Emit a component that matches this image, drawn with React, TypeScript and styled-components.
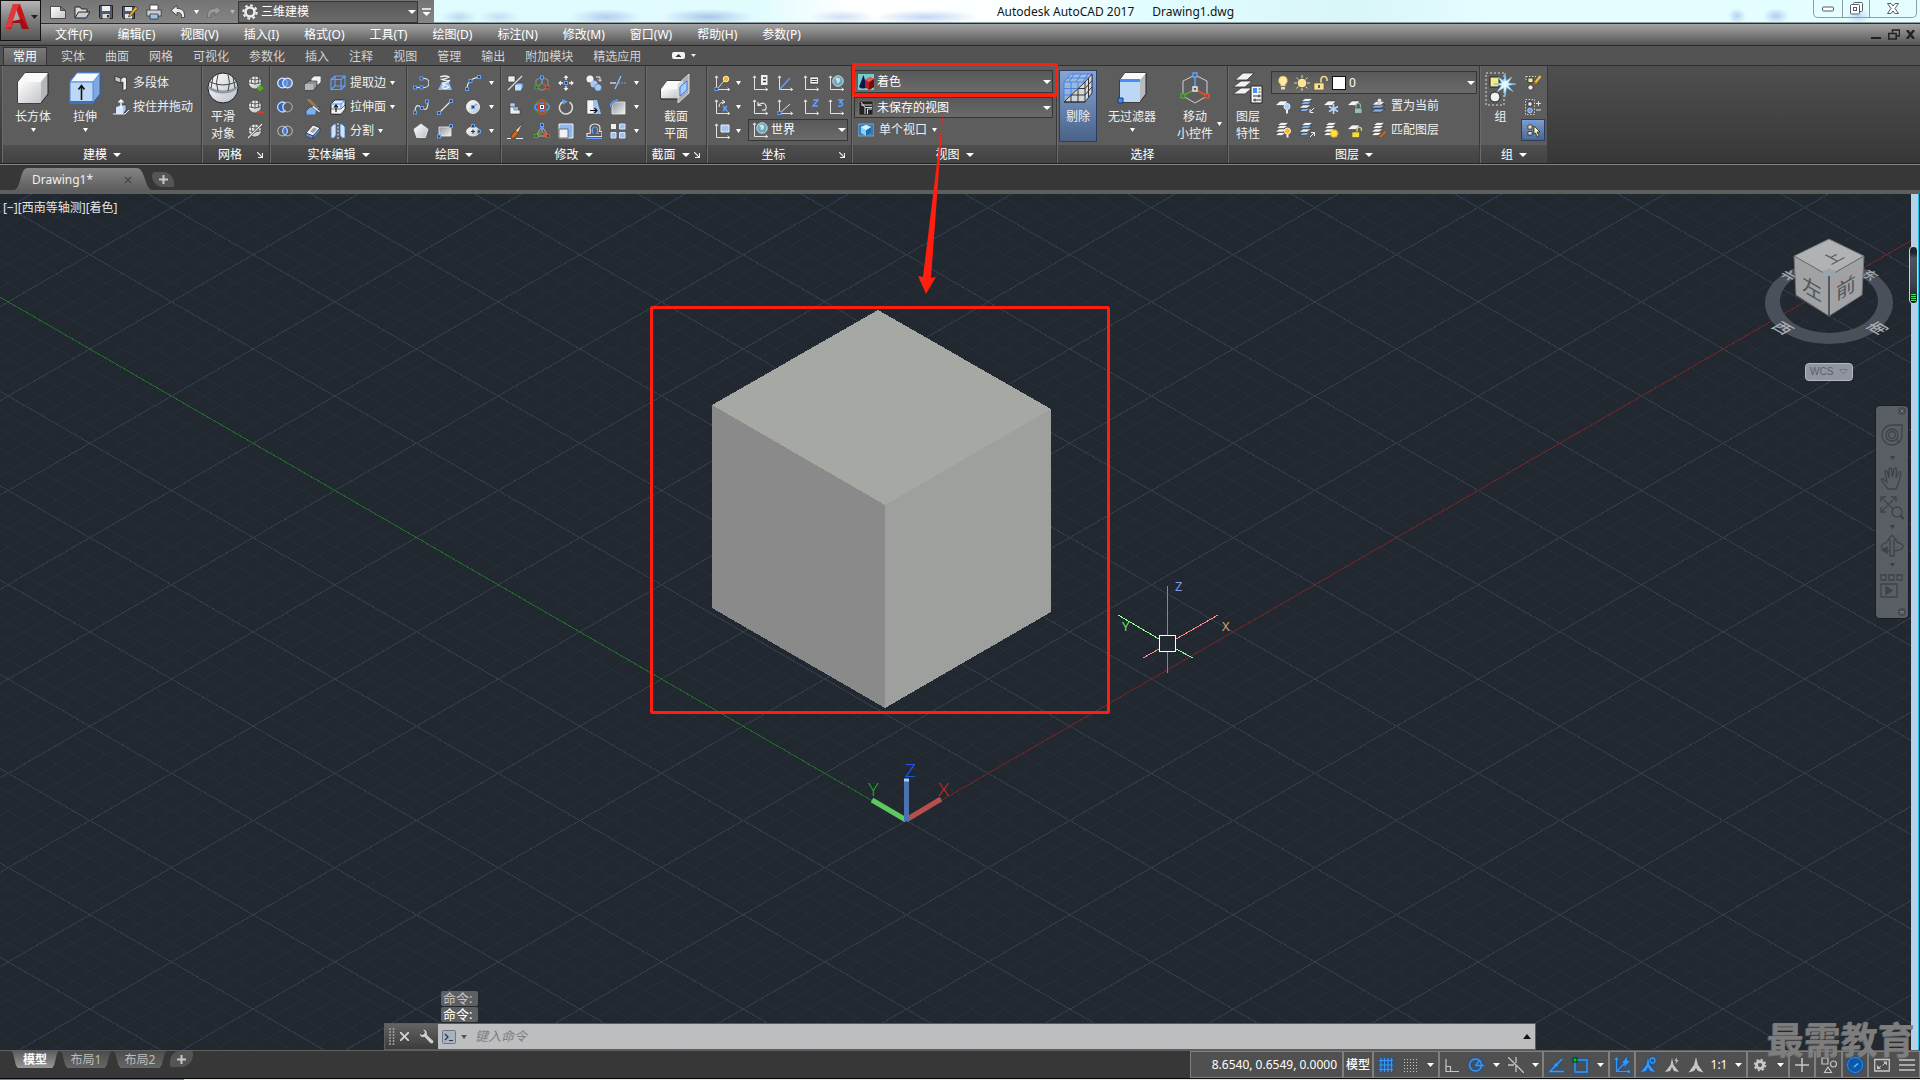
import React from "react";
import styled, { createGlobalStyle, css } from "styled-components";

const Global = createGlobalStyle`
  *, *::before, *::after { box-sizing: border-box; }
  body { margin: 0; background: #373737; overflow: hidden; }
  button, select, input { font: inherit; color: inherit; }
  button { background: none; border: 0; padding: 0; margin: 0; }
  svg { display: block; flex: none; }
`;

const App_ = styled.div`
  display: flex;
  flex-direction: column;
  height: 100vh;
  position: relative;
  overflow: hidden;
  font-family: "Noto Sans", "Noto Sans CJK SC", sans-serif;
  font-size: 12px;
  line-height: 16px;
  color: #f0f0f0;
`;

/* ---------- header ---------- */
const Header = styled.header`
  display: grid;
  grid-template-columns: 41px 1fr;
  grid-template-rows: 24px 22px;
`;
const AppButton = styled.button`
  grid-area: 1 / 1 / 3 / 2;
  z-index: 1;
  height: 41px;
  display: flex;
  align-items: center;
  padding: 0 0 8px 4px;
  gap: 2px;
  border: 1px solid #111;
  background: linear-gradient(#b4b4b4, #7d7d7d 50%, #565656);
`;
const TitleBar = styled.div`
  grid-area: 1 / 2 / 2 / 3;
  display: flex;
  border-bottom: 1px solid #2c2c2c;
`;
const Quick = styled.div`
  display: flex;
  align-items: center;
  padding-left: 5px;
  background: linear-gradient(#747474, #858585);
`;
const QuickButton = styled.button<{ $w?: number }>`
  width: ${(p) => p.$w ?? 24}px;
  height: 22px;
  display: flex;
  align-items: center;
  justify-content: center;
`;
const Glass = styled.div`
  flex: 1;
  display: flex;
  border-bottom: 1px solid #8fa3a6;
  background:
    radial-gradient(18px 7px at 25px 17px, #bcd9f2, transparent),
    radial-gradient(20px 7px at 65px 17px, #c4def4, transparent),
    radial-gradient(36px 8px at 172px 17px, #b3cdee, transparent),
    radial-gradient(46px 8px at 274px 17px, #a9c6ec, transparent),
    radial-gradient(34px 7px at 408px 17px, #d0dff6, transparent),
    radial-gradient(52px 7px at 492px 17px, #c3d6f3, transparent),
    radial-gradient(9px 8px at 1303px 16px, #b5d4f2, transparent),
    radial-gradient(13px 8px at 1342px 16px, #b0cdf0, transparent),
    radial-gradient(12px 8px at 1424px 16px, #c0d9f4, transparent),
    linear-gradient(90deg, #dffbfd, #e2fcfe 22%, #ffffff 28%, #fbffff 40%, #e2fdfe 48%, #d9f6f8 62%, #e6feff 72%, #e4feff);
`;
const Title = styled.h1`
  flex: 1;
  margin: 0;
  display: flex;
  justify-content: center;
  gap: 18px;
  padding-right: 16px;
  font-size: 12px;
  line-height: 24px;
  font-weight: 400;
  color: #141414;
`;
const WindowButtons = styled.div`
  display: flex;
  height: 18px;
  margin-right: 3px;
  border: 1px solid #8d9ea1;
  border-top: 0;
  border-radius: 0 0 5px 5px;
`;
const WindowButton = styled.button<{ $w: number }>`
  width: ${(p) => p.$w}px;
  display: flex;
  align-items: center;
  justify-content: center;
  & + & { border-left: 1px solid #8d9ea1; }
`;
const MenuBar = styled.nav`
  grid-area: 2 / 1 / 3 / 3;
  display: flex;
  align-items: center;
  padding: 0 3px 0 42px;
  background: linear-gradient(#a3a3a3, #7c7c7c 50%, #525252);
  border-bottom: 1px solid #2a2a2a;
`;
const MenuItem = styled.button`
  padding: 0 12px 0 13px;
  color: #fff;
`;
const Spacer = styled.div`flex: 1;`;

/* ---------- ribbon ---------- */
const Tabs = styled.div`
  display: flex;
  align-items: flex-end;
  height: 20px;
  padding-left: 3px;
  background: #535353;
  border-bottom: 1px solid #2e2e2e;
`;
const Tab = styled.button<{ $on?: boolean }>`
  height: 18px;
  padding: 2px 10px 0;
  color: ${(p) => (p.$on ? "#fff" : "#d2d2d2")};
  ${(p) =>
    p.$on &&
    css`
      background: linear-gradient(#7a7a7a, #606060);
      border: 1px solid #333;
      border-bottom: 0;
      padding: 1px 9px 0;
      margin-right: 4px;
    `}
`;
const Ribbon = styled.div`
  display: flex;
  height: 99px;
  padding-left: 2px;
  background: linear-gradient(#4f4f4f, #373737);
  border-bottom: 1px solid #858585;
  box-shadow: inset 0 -1px 0 #222;
`;
const Panel = styled.section<{ $w: number }>`
  width: ${(p) => p.$w}px;
  display: flex;
  flex-direction: column;
  margin-bottom: 1px;
  border-right: 1px solid #3a3a3a;
  box-shadow: inset 1px 0 0 #6a6a6a;
  background: #5d5d5d;
`;
const Body = styled.div<{ $pl?: number }>`
  flex: 1;
  display: flex;
  align-items: flex-start;
  padding: 4px 0 0 ${(p) => p.$pl ?? 0}px;
`;
const Footer = styled.div`
  display: flex;
  align-items: center;
  height: 18px;
  margin-left: 1px;
  padding-top: 2px;
  background: linear-gradient(#4e4e4e, #424242);
`;
const FooterLabel = styled.button`
  flex: 1;
  display: flex;
  align-items: center;
  justify-content: center;
  gap: 6px;
  color: #fff;
`;
const Launcher = styled.button`width: 12px;`;
const Column = styled.div<{ $w?: number; $ml?: number }>`
  width: ${(p) => p.$w ?? 24}px;
  margin: 1px 0 0 ${(p) => p.$ml ?? 0}px;
  display: grid;
  grid-auto-rows: 24px;
`;
const Cell = styled.button`
  display: flex;
  align-items: center;
  justify-content: center;
`;
const Labeled = styled.button<{ $gap?: number; $pl?: number }>`
  display: flex;
  align-items: center;
  height: 24px;
  gap: ${(p) => p.$gap ?? 4}px;
  padding-left: ${(p) => p.$pl ?? 0}px;
  white-space: nowrap;
`;
const List = styled.div<{ $ml: number }>`
  margin: 1px 0 0 ${(p) => p.$ml}px;
  display: flex;
  flex-direction: column;
`;
const Big = styled.button<{ $w: number; $on?: boolean }>`
  width: ${(p) => p.$w}px;
  height: 72px;
  display: flex;
  flex-direction: column;
  align-items: center;
  padding-top: 2px;
  line-height: 17px;
  white-space: nowrap;
  ${(p) =>
    p.$on &&
    css`
      margin-left: 2px;
      background: linear-gradient(#86a5d6, #4a6288);
      border: 1px solid #2b3d60;
      padding-top: 1px;
    `}
`;
const BigText = styled.span`
  margin-top: 4px;
  margin-bottom: 3px;
`;
const GizmoMore = styled.button`
  width: 6px;
  margin: 52px 0 0 -6px;
`;
const CoordGrid = styled.div`
  margin: 1px 0 0 6px;
  width: 100px;
  display: grid;
  grid-template-columns: repeat(4, 24px);
  justify-content: space-between;
  grid-auto-rows: 24px;
`;
const Combo = styled.label<{ $h?: number; $span?: boolean; $w?: number }>`
  display: flex;
  align-items: center;
  gap: 3px;
  height: ${(p) => p.$h ?? 22}px;
  width: ${(p) => (p.$w ? p.$w + "px" : "auto")};
  padding: 0 1px 0 3px;
  border: 1px solid #363636;
  background: linear-gradient(#585858, #6b6b6b);
  ${(p) => p.$span && css`grid-column: 1 / -1;`}
`;
const Pick = styled.select`
  appearance: none;
  flex: 1;
  min-width: 0;
  border: 0;
  padding: 0;
  background: transparent;
  color: #fff;
  outline: 0;
`;
const ViewColumn = styled.div`
  flex: 1;
  display: flex;
  flex-direction: column;
  padding: 0 3px 0 2px;
`;
const ViewGap = styled.div`height: 4px;`;
const LayerBlock = styled.div`
  flex: 1;
  margin: 1px 2px 0 3px;
`;
const LayerRow = styled.div`
  display: flex;
  height: 24px;
`;
const LayerIcon = styled(Cell)`width: 24px;`;
const Toggle = styled(Cell)`
  background: linear-gradient(#7f9fd3, #4b648c);
  border: 1px solid #2b3d60;
  height: 22px;
`;

/* ---------- document tabs ---------- */
const DocTabs = styled.div`
  display: flex;
  align-items: flex-end;
  height: 29px;
  padding-left: 14px;
  background: #373737;
  border-bottom: 4px solid #5e5e5e;
`;
const DocTab = styled.div`
  display: flex;
  align-items: center;
  width: 138px;
  height: 22px;
  padding: 2px 20px 0 18px;
  clip-path: path("M0 22 C8 20 5 0 14 0 H122 C132 0 130 20 138 22 Z");
  background: linear-gradient(#858585, #5e5e5e);
`;
const DocName = styled.button`
  flex: 1;
  text-align: left;
`;
const AddDoc = styled.button`
  align-self: center;
  width: 22px;
  height: 15px;
  margin-top: 4px;
  display: flex;
  align-items: center;
  justify-content: center;
  border-radius: 4px 12px 2px 12px;
  background: #555;
`;

/* ---------- viewport ---------- */
const Stage = styled.main`
  flex: 1;
  min-height: 0;
  display: flex;
  position: relative;
  background: #212830;
`;
const Scene = styled.svg`
  flex: 1 1 0;
  min-width: 0;
  height: 100%;
`;
const Edge = styled.div`
  width: 8px;
  background: #b9d0ea;
  border-right: 1px solid #16c6e8;
  margin-right: 1px;
  box-shadow: 1px 0 0 #1c2a33;
`;
const ViewLabel = styled.div`
  position: absolute;
  left: 3px;
  top: 6px;
  display: flex;
  color: #e4e4e4;
`;
const CubeBox = styled.div`
  position: absolute;
  right: 25px;
  top: 40px;
  display: flex;
  flex-direction: column;
  align-items: center;
`;
const Wcs = styled.button`
  display: flex;
  align-items: center;
  justify-content: space-between;
  width: 48px;
  height: 18px;
  margin-top: 9px;
  padding: 0 4px;
  border: 1px solid #b4b7c2;
  border-radius: 4px;
  background: #9194a1;
  color: #5a5d68;
  font-family: "Liberation Sans", Arial, sans-serif;
  font-size: 10px;
`;
const NavBar = styled.div`
  position: absolute;
  right: 12px;
  top: 212px;
  width: 32px;
  display: flex;
  flex-direction: column;
  align-items: center;
  height: 212px;
  border-radius: 4px;
  background: rgba(108, 112, 117, 0.75);
  box-shadow: 0 0 0 1px #191e25;
`;
const NavButton = styled.button<{ $h: number; $end?: boolean }>`
  height: ${(p) => p.$h}px;
  width: 32px;
  display: flex;
  align-items: center;
  justify-content: ${(p) => (p.$end ? "flex-end" : "center")};
  padding-right: ${(p) => (p.$end ? 2 : 0)}px;
`;
const Meter = styled.div`
  position: absolute;
  right: 2px;
  top: 52px;
  width: 9px;
  height: 58px;
  border: 1px solid #cdd5da;
  border-radius: 4px;
  background: linear-gradient(#1d242b 10%, #4c545d 20%, #3a424a 68%, #14191e);
  display: flex;
  flex-direction: column;
  justify-content: flex-end;
  gap: 1px;
  padding: 0 1px 2px;
`;
const MeterBar = styled.i`
  height: 1px;
  background: #3fe05c;
`;
const Command = styled.div`
  position: absolute;
  left: 20%;
  right: 20%;
  bottom: 0;
  display: flex;
  flex-direction: column;
`;
const History = styled.div`
  display: flex;
  flex-direction: column;
  align-items: flex-start;
  gap: 1px;
  margin: 0 0 1px 57px;
  font-size: 13px;
`;
const HistoryLine = styled.span<{ $dim?: boolean }>`
  height: 15px;
  line-height: 15px;
  width: 37px;
  padding-left: 2px;
  border-radius: 2px;
  background: #5d6060;
  color: ${(p) => (p.$dim ? "#c4c4c4" : "#fff")};
`;
const CommandBar = styled.div`
  display: flex;
  height: 27px;
  border: 1px solid #5a5e63;
`;
const CommandGrip = styled.div`
  width: 53px;
  display: flex;
  align-items: center;
  padding-left: 4px;
  background: linear-gradient(#636363, #3c3c3c);
`;
const CommandButton = styled.button<{ $ml: number }>`
  margin-left: ${(p) => p.$ml}px;
`;
const CommandField = styled.label`
  flex: 1;
  display: flex;
  align-items: center;
  gap: 5px;
  padding: 0 4px;
  background: rgba(202, 203, 204, 0.92);
`;
const CommandInput = styled.input`
  flex: 1;
  border: 0;
  outline: 0;
  padding: 0 0 2px 3px;
  background: transparent;
  font-size: 13px;
  color: #333;
  &::placeholder { color: #7c7e81; font-style: italic; opacity: 1; }
`;

/* ---------- status bar ---------- */
const Bottom = styled.footer`
  display: flex;
  height: 28px;
  background: #373737;
  border-top: 1px solid #606060;
  padding-left: 11px;
`;
const LayoutTab = styled.button<{ $w: number; $on?: boolean }>`
  width: ${(p) => p.$w}px;
  height: 17px;
  margin-right: 1px;
  clip-path: polygon(0 0, 100% 0, 96% 12%, 90% 82%, 86% 100%, 14% 100%, 10% 82%, 4% 12%);
  background: ${(p) => (p.$on ? "linear-gradient(#5c5c5c, #989898)" : "linear-gradient(#4c4c4c, #666)")};
  color: ${(p) => (p.$on ? "#fff" : "#bdbdbd")};
  font-weight: ${(p) => (p.$on ? 700 : 400)};
`;
const AddLayout = styled.button`
  width: 23px;
  height: 16px;
  margin-left: 2px;
  display: flex;
  align-items: center;
  justify-content: center;
  border-radius: 10px 2px 12px 2px;
  background: #545454;
`;
const Seg = styled.div<{ $w?: number }>`
  display: flex;
  align-items: center;
  height: 27px;
  width: ${(p) => (p.$w ? p.$w + "px" : "auto")};
  border: 1px solid #808080;
  background: #505050;
`;
const Coords = styled.button`
  flex: 1;
  text-align: right;
  padding-right: 5px;
  color: #fff;
`;
const Model = styled.button`
  flex: 1;
  color: #fff;
  font-weight: 500;
`;
const SBtn = styled.button<{ $w?: number; $lit?: boolean }>`
  width: ${(p) => p.$w ?? 24}px;
  height: 25px;
  display: flex;
  align-items: center;
  justify-content: center;
  color: ${(p) => (p.$lit ? "#2f9bff" : "#c6c6c6")};
  ${(p) => p.$lit && css`svg { filter: drop-shadow(0 0 2px #0a4fb0); }`}
`;
const Scale = styled.span`
  width: 22px;
  text-align: center;
  color: #fff;
`;
const Taskbar = styled.div`
  height: 2px;
  border-top: 1px solid #08090b;
  background: linear-gradient(90deg, #7c8288 184px, #e9e9e4 184px);
`;
const Watermark = styled.div`
  position: absolute;
  right: 5px;
  bottom: 20px;
  font-size: 37px;
  line-height: 40px;
  font-weight: 700;
  color: rgba(128, 128, 128, 0.95);
  text-shadow: -1px 1px 0 rgba(110, 110, 110, 0.8);
  pointer-events: none;
`;
const Markup = styled.svg`
  position: absolute;
  left: 0;
  top: 0;
  pointer-events: none;
`;

/* ---------- icons ---------- */
const B = "#62a0ff";
const W = "#e6e6e6";
const dot = (x: number, y: number, c = B) => (
  <rect x={x - 1.5} y={y - 1.5} width="3" height="3" fill="#3b4350" stroke={c} strokeWidth="1" />
);
const sphere = (
  <>
    <circle cx="8" cy="7.5" r="6.5" fill="url(#ball)" stroke="#333" strokeWidth=".6" />
    <path d="M1.5 7.5Q8 10.5 14.5 7.5M2.8 4Q8 6 13.2 4M8 1v8.5M5 1.8Q3.6 5 5 9M11 1.8Q12.4 5 11 9" fill="none" stroke="#444" strokeWidth=".8" />
  </>
);
const axes = <path d="M2.5 1v13.5H16M1 3l1.500-2.200L4 3M13.500 12.800l2.200 1.700-2.200 1.500" fill="none" stroke="#e2e2e2" strokeWidth="1" />;
const layers = (c = "#f4f4f4", top = "#f4f4f4") => (
  <g stroke="#333" strokeWidth=".5">
    <path d="M0 13.500l4-3h7l-4 3z" fill={c} />
    <path d="M0 10l4-3h8l-4 3z" fill="#f4f4f4" />
    <path d="M1 6.500l4-3h8l-4 3z" fill={c} />
    <path d="M2 3.500l4-3h8l-4 3z" fill={top} />
  </g>
);
const sheet = <path d="M0 7.500l5-4.500h8l-4 4.500z" fill="#f2f2f2" stroke="#333" strokeWidth=".5" />;

const small: Record<string, React.ReactNode> = {
  newfile: <path d="M.5 2.500h10l5 4v8H.5zM10.500 2.500v4h5" fill="url(#paper)" stroke="#333" strokeWidth=".8" />,
  open: (<><path d="M1 14V3h5l1.500 2H13v3" fill="#ddd" stroke="#222" /><path d="M1 14L4.500 8H16l-4 6z" fill="#c4ccd4" stroke="#222" /></>),
  save: (<><path d="M1.500 1.500h13v13h-12l-1-1z" fill="#4e5b6c" stroke="#222" /><path d="M4 2h8v5H4z" fill="#eee" /><path d="M4.500 10h7v4.500h-7z" fill="#d8d8d8" /><path d="M9 11h2v2.500H9z" fill="#333" /></>),
  saveas: (<><path d="M.5 2.500h12v12h-11l-1-1z" fill="#4e5b6c" stroke="#222" /><path d="M3 3h7v4H3zM3 10h7v4.500H3z" fill="#e6e6e6" /><path d="M7 11l6.500-8.500 2.200 1.800L9 12l-2.500 1z" fill="#f3b23c" stroke="#222" strokeWidth=".6" /></>),
  print: (<><path d="M4 6V1h8v5" fill="#fff" stroke="#333" strokeWidth=".8" /><path d="M.8 6h14.400v6H.8z" fill="#c9ccd0" stroke="#333" strokeWidth=".8" /><path d="M4 10h8v5H4z" fill="#9ec3f2" stroke="#333" strokeWidth=".8" /></>),
  undo: <path d="M1 6.500L7 1.500v3c5 0 8 2 7.500 9h-3c.3-4-1-5-4.500-5v3z" fill="#e9e9e9" stroke="#333" strokeWidth=".8" />,
  redo: <path d="M15 6.500L9 1.500v3c-5 0-8 2-7.500 9h3c-.3-4 1-5 4.500-5v3z" fill="#9a9a9a" stroke="#666" strokeWidth=".8" />,
  gear: (<><circle cx="8" cy="8" r="4.500" fill="none" stroke="#efefef" strokeWidth="2.600" /><circle cx="8" cy="8" r="6.700" fill="none" stroke="#efefef" strokeWidth="2" strokeDasharray="2.630 2.630" /></>),
  polysolid: (<><path d="M2 1l6 2.500V8L2 6z" fill="#c4c8ce" stroke="#222" strokeWidth=".7" /><path d="M8 3.500L11 2l2.500 1v11l-3.500 2V7L8 8z" fill="#e9ebee" stroke="#222" strokeWidth=".7" /></>),
  presspull: (<><path d="M3 8l3-2h7v5l-3 4H3z" fill="#a9c8f2" stroke="#345" strokeWidth=".7" /><path d="M3 8h7v7H3z" fill="#dbe8fa" /><path d="M8 9V1M5.500 3.500L8 1l2.500 2.500" stroke="#fff" strokeWidth="1.400" fill="none" /><path d="M0 15h12l4-4" fill="none" stroke="#eee" /></>),
  meshPlus: (<>{sphere}<path d="M10 13h6M13 10v6" stroke="#4fb312" strokeWidth="2.400" /></>),
  meshMinus: (<>{sphere}<path d="M10 13.500h6" stroke="#e23a16" strokeWidth="2.400" /></>),
  meshSlash: (<>{sphere}<path d="M1 15L15 1" stroke="#444" strokeWidth="2.400" /><path d="M1 15L15 1" stroke="#f0f0f0" strokeWidth="1.200" /></>),
  union: (<><circle cx="5.500" cy="8" r="4.800" fill="#3f73c9" stroke="#dfeaff" strokeWidth="1.300" /><circle cx="10.500" cy="8" r="4.800" fill="#5d94e6" fillOpacity=".7" stroke="#dfeaff" strokeWidth="1.300" /></>),
  subtract: (<><circle cx="10.500" cy="8" r="4.800" fill="none" stroke="#9aa0a8" strokeWidth="1.300" /><path d="M8 3.900a4.800 4.800 0 1 0 0 8.200a4.800 4.800 0 0 1 0-8.200z" fill="#2e63b8" stroke="#bcd5ff" strokeWidth="1.300" /></>),
  intersect: (<><circle cx="5.500" cy="8" r="4.800" fill="none" stroke="#a9aeb5" strokeWidth="1.200" /><circle cx="10.500" cy="8" r="4.800" fill="none" stroke="#a9aeb5" strokeWidth="1.200" /><path d="M8 3.900a4.800 4.800 0 0 1 0 8.200a4.800 4.800 0 0 1 0-8.200z" fill="#3a78dc" stroke="#cfe0ff" /></>),
  thicken: (<><path d="M6 4l3-3h7v6l-3 3H6z" fill="#f2f2f2" stroke="#333" strokeWidth=".6" /><path d="M0 9l4-3h8v5l-3 4H0z" fill="#8d9299" stroke="#222" strokeWidth=".6" /><path d="M0 9h8.500v6H0z" fill="#b2b6bb" /></>),
  slice: (<><path d="M1 12l4-4h10l-4 5v3H1z" fill="#7fb0ee" stroke="#234" strokeWidth=".6" /><path d="M3 0l8 8" stroke="#a87a45" strokeWidth="2.600" /><path d="M8 6l8 7-2 .5-7-5z" fill="#e8e8e8" stroke="#222" strokeWidth=".5" /></>),
  shell: (<><path d="M1 10l7-8 7 3-7 8z" fill="#f0f0f0" stroke="#222" strokeWidth=".7" /><path d="M1 10l7 3v3l-7-3zM15 5v3l-7 8v-3z" fill="#5f94de" stroke="#223" strokeWidth=".5" /><path d="M5 8.500l4-4 3 1.500-4 4z" fill="#9a9da2" /></>),
  edges: <path d="M1 4.500h10v10H1zM5 1h10v10H5zM1 4.500L5 1M11 4.500L15 1M11 14.500l4-3.500M1 14.500L5 11" fill="none" stroke={B} strokeWidth="1.100" />,
  extrudeFace: (<><path d="M1 5l4-4h10v9l-4 5H1z" fill="#dce9fb" stroke="#222" strokeWidth=".8" /><path d="M1 10h10l4-4v4l-4 5H1z" fill="#f2f2f2" stroke="#222" strokeWidth=".6" /><path d="M1 5h10v5M11 5l4-4" fill="none" stroke="#4f8ee8" /><path d="M6 13V6M4 8.500L6 6l2 2.500" stroke="#111" strokeWidth="1.200" fill="none" /></>),
  separate: (<><path d="M1 4l3-3h2v11l-2 3H1zM15 4l-3-3h-2v11l2 3h3z" fill="#cfe2fb" stroke="#3b6eb5" strokeWidth=".8" /><path d="M8 0v16" stroke="#eee" strokeDasharray="2 1.500" /></>),
  pline: (<><path d="M2 12.500h6.500M8.500 3.500h3a4.500 4.500 0 0 1 0 9h-3" fill="none" stroke={W} strokeWidth="1.200" />{dot(2, 12.500)}{dot(8.500, 12.500)}{dot(8.500, 3.500)}</>),
  helix: (<><path d="M1 15L5 7h7l3 8z" fill="#8db8f3" /><path d="M3 2Q8 0 12 2Q9 4 5 4.500q4 2 8 1Q10 8 5 8.500q5 1.500 7 3.500-3 2.500-6 1-1-2.500 2-3" fill="none" stroke="#f4f4f4" strokeWidth="1.300" /></>),
  arc: (<><path d="M2 14Q2 4 14 2" fill="none" stroke={W} strokeWidth="1.200" />{dot(2, 14)}{dot(5.500, 6)}{dot(14, 2)}</>),
  spline: (<><path d="M2 14Q2 5 6 7t5 3q4 2 4-8" fill="none" stroke={W} strokeWidth="1.200" />{dot(2, 13.500)}{dot(9, 9)}{dot(14, 2.500)}</>),
  line: (<><path d="M2 14L14 2" stroke={W} strokeWidth="1.200" />{dot(2, 14)}{dot(14, 2)}</>),
  circle: (<><circle cx="8" cy="8" r="6.500" fill="url(#ball)" stroke="#fff" strokeWidth=".8" /><path d="M8 8l4-3" stroke="#7f8a9a" />{dot(8, 8)}</>),
  polygon: <path d="M8 1l7 5.200-2.700 8.300H3.700L1 6.200z" fill="url(#ball)" stroke="#f4f4f4" strokeWidth=".8" />,
  rect: (<><path d="M2 4h12v9H2z" fill="url(#steel)" stroke="#eee" strokeWidth=".8" />{dot(2, 13.500)}{dot(14, 3)}</>),
  ellipse: (<><ellipse cx="8" cy="8.500" rx="6.500" ry="4.500" fill="url(#ball)" stroke="#eee" strokeWidth=".8" /><path d="M6 8.500h4M8 6.500v4" stroke="#333" strokeWidth="1.200" />{dot(8, 3)}{dot(14, 8.500)}</>),
  align3: (<><path d="M1 1h7v6H1z" fill="#eee" stroke="#333" strokeWidth=".6" /><path d="M1 15L15 1" stroke="#ddd" strokeWidth="1.200" /><path d="M8 10l2-2h6v5l-2 2.500H8z" fill="#8fbaf5" stroke="#234" strokeWidth=".6" /><path d="M8 10h6v5.500H8z" fill="#c9defa" /></>),
  gizmoMove: (<><path d="M8 8V2" stroke={B} strokeWidth="1.400" /><path d="M8 8l5.500 4.500" stroke="#e2512c" strokeWidth="1.400" /><path d="M8 8l-5.500 4.500" stroke="#4fa82e" strokeWidth="1.400" /><path d="M8 2l6 3v6M8 2L2 5v6M2 12l6 3.500L14 12" stroke="#aaa" fill="none" strokeWidth=".7" />{dot(8, 2.500)}{dot(13.500, 12.500, "#e2512c")}{dot(2.500, 12.500, "#4fa82e")}</>),
  move: (<><path d="M8 0l2.500 3h-5zM8 16l2.500-3h-5zM0 8l3-2.500v5zM16 8l-3-2.500v5z" fill="#f0f0f0" /><path d="M8 3v2M8 11v2M3 8h2M11 8h2" stroke="#f0f0f0" strokeWidth="1.300" />{dot(8, 8)}</>),
  copy: (<><circle cx="4" cy="4" r="3.500" fill="#f2f2f2" /><circle cx="8" cy="9" r="3.500" fill="#a6c8f6" /><circle cx="12" cy="12.500" r="3.500" fill="#a6c8f6" stroke="#456" strokeWidth=".4" /><path d="M10 2h4v4M12 4.500L14 6.500l2-2" stroke="#eee" fill="none" /></>),
  trim: (<><path d="M0 8h6" stroke="#eee" strokeWidth="1.200" /><path d="M8 8h8" stroke={B} strokeWidth="1.200" strokeDasharray="2 1" /><path d="M5 14L11 1" stroke="#8ebcff" strokeWidth="1.400" /></>),
  align: (<><path d="M3 4h5v4H3z" fill="#aecdf7" stroke="#345" strokeWidth=".5" /><path d="M3 8h4v3h6v4H3z" fill="#eee" stroke="#333" strokeWidth=".6" /><path d="M7 8h4v3H7z" fill="#7fb0ee" /></>),
  gizmoRot: (<><circle cx="8" cy="8" r="7" fill="none" stroke="#3f8f2b" strokeWidth="1.600" /><ellipse cx="8" cy="8" rx="7.300" ry="4" fill="none" stroke="#4e93ff" strokeWidth="1.600" /><ellipse cx="8" cy="8" rx="3.500" ry="7.300" fill="none" stroke="#e04020" strokeWidth="1.600" />{dot(8, 8, "#fff")}</>),
  rotate: (<><path d="M5.500 2.500a6.500 6.500 0 1 0 6 .6" fill="none" stroke="#dedede" strokeWidth="1.500" /><path d="M4 0l6 2.500L5 5.500z" fill={B} /></>),
  mirror: (<><path d="M1 1h7v14H1z" fill="#f4f4f4" stroke="#333" strokeWidth=".5" /><path d="M8 1h3l4 14H8z" fill="#9cc2f3" /><path d="M4 11.500h7M8.500 9l2.500 2.500L8.500 14" stroke="#111" strokeWidth="1.200" fill="none" /></>),
  fillet: (<><path d="M2 15V9q0-6 7-6h6v12z" fill="url(#steel)" stroke="#eee" strokeWidth=".8" /><path d="M0 8q1-6 8-7" stroke={B} strokeWidth="1.600" fill="none" /></>),
  brush: (<><path d="M16 0L8 8l2.500 2.500z" fill="#f0d9a8" stroke="#222" strokeWidth=".5" /><path d="M8.500 7.500l3 2.500-4 5q-3 1-4.500-.5 2-1 2-3z" fill="#d8641a" stroke="#222" strokeWidth=".5" /><path d="M0 15.500h4M9 15.500h7" stroke="#eee" /></>),
  gizmoScale: (<><path d="M8 3l6 10H2z" fill="none" stroke="#aaa" /><path d="M8 9V2" stroke={B} strokeWidth="1.600" /><path d="M8 9l6 4" stroke="#e2512c" strokeWidth="1.600" /><path d="M8 9l-6 4" stroke="#4fa82e" strokeWidth="1.600" />{dot(8, 2)}{dot(14, 13, "#e2512c")}{dot(2, 13, "#4fa82e")}</>),
  scale: (<><path d="M1 1h14v14H1z" fill="#8eb8f0" stroke="#eee" strokeWidth="1" /><path d="M1 6h9v9H1z" fill="#f2f2f2" stroke="#555" strokeWidth=".8" /></>),
  offset: (<><path d="M4.500 8.500Q2.500 1 9 1t4.500 7.500H16v5H1v-3h3z" fill="none" stroke="#dedede" strokeWidth="1.200" /><path d="M7 10.500Q5 4 9 4t2 6.500h2" fill="none" stroke={B} strokeWidth="1.200" /><path d="M0 15.500h16" stroke={B} /></>),
  array: (<><path d="M1 1h5v5H1z" fill="#eee" /><path d="M9.500 1h5.500v5H9.500zM1 9.500h5v5.500H1zM9.500 9.500H15V15H9.500z" fill="#9cc2f3" stroke="#d6e6fc" /></>),
  ucsA: (<>{axes}<path d="M4 13L10 6" stroke="#ddd" /><circle cx="12" cy="4" r="2.800" fill="#ffb12b" stroke="#fff0b0" />{dot(2.500, 14)}</>),
  ucsB: (<>{axes}<path d="M9 0h6.500v10H9z" fill="#f0f0f0" /><path d="M11 3h3M11 6.500h3" stroke="#345" strokeWidth="1.600" /></>),
  ucsC: (<>{axes}<path d="M3 14L13 3" stroke={B} strokeWidth="1.300" /></>),
  ucsD: (<>{axes}<path d="M7 2h8.500v7H7z" fill="#f0f0f0" stroke="#333" strokeWidth=".6" /><path d="M8.500 4.500h5.500M8.500 6.500h5.500" stroke="#444" /></>),
  ucsE: (<>{axes}<circle cx="10" cy="6" r="5.300" fill="#6fa9bd" stroke="#dcebf3" strokeWidth=".8" /><path d="M7 3q4-1 5 1t-2 4q-2 0-1-2z" fill="#c8e6dc" /></>),
  ucsF: (<>{axes}<path d="M5 8q0-5 5-5M8 1l3 2-3 2" stroke="#eee" fill="none" /><path d="M9 7l4 5M13 7l-4 5" stroke={B} strokeWidth="1.600" /></>),
  ucsG: (<>{axes}<path d="M6 6q7-4 8 1t-4 4M6 3v3.500h3.500" stroke="#e2e2e2" fill="none" strokeWidth="1.200" /></>),
  ucsH: (<>{axes}<path d="M3 14L13 5" stroke="#ddd" />{dot(2.500, 14)}</>),
  ucsZ: (<>{axes}<path d="M10 1h5l-5 6h5" stroke={B} strokeWidth="1.500" fill="none" /></>),
  ucs3: (<>{axes}<path d="M10 1h4.500L12 3.500q3 0 2.500 2.200T10 7" stroke={B} strokeWidth="1.500" fill="none" /></>),
  ucsView: (<>{axes}<path d="M7 2h8v7H7z" fill="#9fc6f7" stroke="#eee" /></>),
  shaded: (<><path d="M0 0h16v16H0z" fill="#74cdc9" /><path d="M1 13L5.500 1 9 13q-4 3-8 0z" fill="#0d1550" /><path d="M7 6l5-3 4 2v8l-5 3-4-3z" fill="#c21d1d" /><path d="M7 6l5-3 4 2-4.500 3z" fill="#e65757" /><path d="M11.500 8L16 5v8l-5 3z" fill="#6d0d0d" /></>),
  unsaved: (<><path d="M1 1h14v14H1z" fill="#222" stroke="#888" strokeWidth=".6" /><path d="M3 5h11M3 2l4 5.500V14M9.500 14V9H14M7 7.500h7" stroke="#ddd" fill="none" /></>),
  viewport: (<><path d="M0 2h16v12H0z" fill="#3d78b7" stroke="#9cc9ee" strokeWidth=".6" /><path d="M3 5l5-2 5 2v6l-5 3-5-3z" fill="#7fd4f7" /><path d="M8 8l5-3v6l-5 3z" fill="#1e6fae" /><path d="M3 5l5-2 5 2-5 3z" fill="#d5f3fd" /></>),
  bulb: (<><path d="M8 1a4.500 4.500 0 0 1 2.500 8.200V11h-5V9.200A4.500 4.500 0 0 1 8 1z" fill="#ffe9a6" stroke="#c59632" strokeWidth=".6" /><path d="M6 12h4v2.500H6z" fill="#ddd" /></>),
  sun: (<><circle cx="8" cy="8" r="3.800" fill="#ffe28a" stroke="#fff0c0" /><path d="M8 0v3M8 13v3M0 8h3M13 8h3M2.500 2.500l2 2M11.500 11.500l2 2M13.500 2.500l-2 2M2.500 13.500l2-2" stroke="#f0d890" /></>),
  lock: (<><path d="M8 8V4.500a3 3 0 0 1 6 0V6" fill="none" stroke="#e8d890" strokeWidth="1.600" /><path d="M1 8h10v7H1z" fill="#f6e39a" stroke="#6e5a1c" strokeWidth=".7" /><path d="M6 10v3" stroke="#333" strokeWidth="1.500" /></>),
  la: (<>{sheet}<circle cx="12" cy="8.500" r="3" fill="#a5ccfb" stroke="#e8f2ff" /><path d="M12 12v3.500" stroke="#eee" strokeWidth="2" /></>),
  lb: (<>{layers("#7fb0ee")}<path d="M15 10l-4 4M11 11v3.500h3.500" stroke="#eee" fill="none" /></>),
  lc: (<>{sheet}<path d="M10.500 6v10M6 8.500l9 5M15 8.500l-9 5" stroke="#b9d7ff" strokeWidth="1.600" /></>),
  ld: (<>{sheet}<path d="M9 10V7.500a2 2 0 0 1 4.500 0V10" fill="none" stroke="#8fb5a0" strokeWidth="1.200" /><path d="M7.500 10h7.500v5.500H7.500z" fill="#98bfa8" stroke="#3b5a48" strokeWidth=".7" /></>),
  le: (<><path d="M0 14l4-3h10l-4 3zM0 10l4-3h10l-4 3z" fill="#7fb0ee" stroke="#223" strokeWidth=".5" /><path d="M1 7l4-3.500h9L10 7z" fill="#f2f2f2" stroke="#333" strokeWidth=".5" /><path d="M8 7V2" stroke="#ccc" strokeWidth="2" /><circle cx="8.500" cy="2.500" r="2" fill="#ddd" /></>),
  lf: (<>{layers()}<circle cx="12.500" cy="9" r="3" fill="#ffb52e" stroke="#fff0c0" /><path d="M12.500 12v3.500" stroke="#eee" strokeWidth="2" /></>),
  lg: (<>{layers("#7fb0ee")}<path d="M11 15l4.500-4.500M12 10.500h3.500V14" stroke="#eee" fill="none" /></>),
  lh: (<>{layers()}<circle cx="11" cy="11.500" r="3.600" fill="#ffe23a" stroke="#f5b52c" strokeDasharray="1.500 1" strokeWidth="1.600" /></>),
  li: (<>{sheet}<path d="M10 10V7.500a2 2 0 0 1 4.500 0V9" fill="none" stroke="#f3d84e" strokeWidth="1.200" /><path d="M5 10h7.500v5.500H5z" fill="#f7dc4a" stroke="#6e5a1c" strokeWidth=".7" /></>),
  lj: (<>{layers()}<path d="M14 8l2 2-6 6-4-2 4-1z" fill="#c56a28" stroke="#442" strokeWidth=".5" /></>),
  g1: (<><path d="M1 1.500h10M1 1v4" stroke="#ddd" strokeDasharray="1.500 1.500" /><path d="M3 3h5v4.500H3z" fill="#f4ea8c" stroke="#222" strokeWidth=".7" /><circle cx="5.500" cy="12.500" r="2.600" fill="#eee" stroke="#222" strokeWidth=".7" /><path d="M15.500 1L10 8" stroke="#edc32f" strokeWidth="2.200" /><path d="M10.500 7.500L8 10" stroke="#c9482a" strokeWidth="1.400" /></>),
  g2: (<><path d="M.5.500h9v15h-9z" fill="none" stroke="#ccc" strokeDasharray="1.500 1.500" /><path d="M3 3h4v4H3z" fill="#eee" stroke="#222" strokeWidth=".7" /><circle cx="5" cy="11.500" r="2.300" fill="#5b93f0" stroke="#dfe9ff" strokeWidth=".7" /><path d="M11 4.500h5M13.500 2v5M11 11h5" stroke="#ddd" /></>),
  g3: (<><path d="M.5.500h9v15h-9z" fill="none" stroke="#4f8cf0" strokeDasharray="1.500 1.500" /><path d="M3 3h4v4H3z" fill="#f4ea8c" stroke="#222" strokeWidth=".7" /><path d="M3 9.500h4v3.500H3z" fill="#ddd" stroke="#222" strokeWidth=".7" /><path d="M9 4l6 6h-3l2 4-1.500 1-2-4L9 12z" fill="#fff6c0" stroke="#111" strokeWidth=".7" /></>),
  /* status bar */
  sGrid: <path d="M1 3.500h14M1 8h14M1 12.500h14M3 1v14M6.500 1v14M10 1v14M13.500 1v14" stroke="currentColor" strokeWidth="1.200" />,
  sSnap: <path d="M2 2.500h13M2 5.500h13M2 8.500h13M2 11.500h13M2 14.500h13" stroke="currentColor" strokeDasharray="1 2" />,
  sOrtho: <path d="M2 2v12.500h13M2 9.500h4.500v5" fill="none" stroke="currentColor" strokeWidth="1.200" />,
  sPolar: (<><circle cx="7.500" cy="8" r="6" fill="none" stroke="currentColor" strokeWidth="1.500" /><path d="M7.500 8.500H16M7.500 8.500L12 3" stroke="currentColor" strokeWidth="1.300" /></>),
  sIso: <path d="M0 0l16 16M8 0v6M8 8v7M6 8H0" stroke="currentColor" strokeWidth="1.300" fill="none" />,
  sTrack: (<><path d="M14 2L2 14.500h14" fill="none" stroke="currentColor" strokeWidth="1.500" /><circle cx="8" cy="8" r="1.800" fill="currentColor" /></>),
  sOsnap: (<><path d="M3 3h12v12H3z" fill="none" stroke="currentColor" strokeWidth="1.400" /><path d="M1 1h4v4H1z" fill="#00d000" stroke="#031" /></>),
  sUcs: (<><path d="M2.500 1v13.500H16M2.500 14.500L11 6M1 3l1.500-2L4 3M14 13l2 1.500L14 16" fill="none" stroke="currentColor" strokeWidth="1.200" /><path d="M13 0L8 6h3l-1 4 6-6h-3z" fill="currentColor" /></>),
  sAnnoA: (<><path d="M8 1L6.500 8 1 15l5-1 2-4 2 4 5 1-5.500-7z" fill="currentColor" /><circle cx="12.500" cy="3.500" r="2.500" fill="none" stroke="currentColor" strokeWidth="1.300" /></>),
  sAnnoB: (<><path d="M8 1L6.500 8 1 15l5-1 2-4 2 4 5 1-5.500-7z" fill="currentColor" /><path d="M13 0l-3 4h2l-1 4 4-5h-2z" fill="currentColor" stroke="#505050" strokeWidth=".5" /></>),
  sAnnoC: <path d="M8 0L6 8 .5 15.500l5.500-1.500 2-3 2 3 5.500 1.500L10 8z" fill="currentColor" />,
  sGear: (<><circle cx="8" cy="8" r="3.500" fill="none" stroke="currentColor" strokeWidth="3" /><circle cx="8" cy="8" r="5.300" fill="none" stroke="currentColor" strokeWidth="2" strokeDasharray="2.080 2.080" /></>),
  sPlus: <path d="M1 8h14M8 1v14" stroke="currentColor" strokeWidth="1.500" />,
  sUnits: (<><path d="M1 1h6v6H1z" fill="none" stroke="currentColor" strokeWidth="1.200" /><circle cx="12.500" cy="7" r="3" fill="none" stroke="currentColor" strokeWidth="1.200" /><path d="M7 10l3.500 5.500h-7z" fill="none" stroke="currentColor" strokeWidth="1.200" /></>),
  sPerf: (<><circle cx="8" cy="8" r="7.500" fill="#0a5aa8" stroke="#1d8fff" /><path d="M7 10l4-3.500" stroke="#63b8ff" strokeWidth="1.600" /></>),
  sFull: (<><path d="M.7 2.500h14.600v11.500H.7z" fill="none" stroke="currentColor" strokeWidth="1.300" /><path d="M9 4.500h4v4zM7 12H3V8z" fill="currentColor" /><path d="M8.500 8.500L12 5M7 9l-3.500 3" stroke="currentColor" /></>),
  sMenu: <path d="M0 3h16M0 8h16M0 13h16" stroke="currentColor" strokeWidth="1.300" />,
};

const big: Record<string, React.ReactNode> = {
  box: (<><path d="M1 10L8 1h23v21l-7 9H1z" fill="#b4b6ba" stroke="#222" /><path d="M1 10L8 1h23l-7 9z" fill="#fafafa" /><path d="M1 10h23v21H1z" fill="url(#paper)" /></>),
  extrude: (<><path d="M1 10L8 1h23v21l-7 9H1z" fill="#7fa9e0" stroke="#2c5fae" /><path d="M1 10L8 1h23l-7 9z" fill="#f6f9fd" stroke="#5b93e6" /><path d="M1 10h23v21H1z" fill="#bdd8f5" stroke="#4f87da" /><path d="M1 30h23" stroke="#3b6fc2" strokeWidth="2" /><path d="M12.500 28V14M9.500 17.500l3-4 3 4" stroke="#111" strokeWidth="1.600" fill="none" /></>),
  smooth: (<><circle cx="16" cy="16" r="15" fill="url(#ball)" stroke="#222" /><path d="M1.500 14q14.500 9 29 0v3q-14.500 9-29 0z" fill="#8f98a5" /><path d="M3 10q13 6 26 0M11 2q-3 9 0 17M21 2q3 9 0 17M6 5l-2 11M26 5l2 11" stroke="#444" fill="none" /></>),
  section: (<><path d="M1 17l6-8h17v13l-6 5H1z" fill="#b7bbc0" stroke="#222" /><path d="M1 17l6-8h17l-6 8z" fill="#fafafa" /><path d="M1 17h17v9H1z" fill="url(#paper)" /><path d="M18 12L29 2v19L18 31z" fill="#c8ccd2" fillOpacity=".75" stroke="#ddd" /><path d="M20 15l7-6v9l-7 6z" fill="#aacdf6" stroke="#3b7be0" /></>),
  cull: (<><path d="M2 10L9 2h21v19l-7 9H2z" fill="#dfe5ee" fillOpacity=".4" stroke="#4a84dc" /><path d="M2 30L23 10 30 2v19l-7 9z" fill="#d4d8dd" stroke="#333" /><path d="M2 10h21M9 10v13M16 10v6M2 16.500h14M2 23h7M5 6h21M12 2l-5 8M19 2l-5 8M26 2l-5 8" fill="none" stroke="#3f83f0" /><path d="M2 30h21V10M16 17v13M9 23v7M9 23h14l7-8M16 16.500h7l7-8M26.500 6v20" fill="none" stroke="#333" /></>),
  filter: (<><path d="M4 8l5-7h21v21l-6 8H4z" fill="#b6b9be" stroke="#222" /><path d="M4 8l5-7h21l-6 7z" fill="#fafafa" /><path d="M4 8h20v22H4z" fill="#bdd8f5" /><path d="M4 7h20v3H4z" fill="#4a8cf5" /><path d="M2 26h5v5H2z" fill="#4a8cf5" stroke="#1d3970" /></>),
  gizmo: (<><path d="M16 3l12 6v15l-12 7-12-7V9z" fill="none" stroke="#d0d0d0" /><path d="M16 17V3" stroke={B} strokeWidth="1.500" /><path d="M16 17L4 24" stroke="#4fa82e" strokeWidth="1.500" /><path d="M16 17l12 7" stroke="#e2512c" strokeWidth="1.500" /><path d="M14 1h4v4h-4z" fill="#5d5d5d" stroke={B} strokeWidth="1.400" /><path d="M2 22h4v4H2z" fill="#5d5d5d" stroke="#4fa82e" strokeWidth="1.400" /><path d="M26 22h4v4h-4z" fill="#5d5d5d" stroke="#e2512c" strokeWidth="1.400" /><path d="M14 15h4v4h-4z" fill="#5d5d5d" stroke="#eee" strokeWidth="1.400" /></>),
  layers: (<><g fill="#f2f2f2" stroke="#333" strokeWidth=".8"><path d="M1 22l8-6h11l-7 6z" /><path d="M1 15l8-6h11l-7 6z" /><path d="M3 8l8-7h11l-7 7z" /></g><path d="M19 14h11v17H19z" fill="#f6f6f6" stroke="#222" /><path d="M21 16h4v5h-4z" fill="#4a8cf5" /><path d="M26.500 17h2M26.500 20h2M21 24h8M21 28h8M27 22.500v3M23 26.500v3" stroke="#333" /></>),
  group: (<><path d="M1 1h18v32H1z" fill="none" stroke="#ddd" strokeDasharray="2 2" /><path d="M5 5h9v10H5z" fill="#f4ea8c" stroke="#222" /><circle cx="10" cy="25" r="5" fill="#eef4f6" stroke="#222" /><path d="M20 1l1.200 8 5.600-4-3.600 6L31 12l-8 1.500 5 6-6.500-4L20 25l-1.500-9-6.500 4 4.500-6.500L9 12l8-1-4-6 6 4z" fill="#e9f6ff" stroke="#6cbcf0" strokeWidth=".7" /></>),
};

const Icon = ({ n }: { n: string }) => (
  <svg width="16" height="16" viewBox="0 0 16 16" aria-hidden="true">{small[n]}</svg>
);
const BigIcon = ({ n }: { n: string }) => (
  <svg width="32" height="32" viewBox="0 0 32 32" overflow="visible" aria-hidden="true">{big[n]}</svg>
);
const Caret = ({ w = 5, c = "#fff" }: { w?: number; c?: string }) => (
  <svg width={w} height="4" viewBox="0 0 8 4" preserveAspectRatio="none" aria-hidden="true">
    <path d="M0 0h8L4 4z" fill={c} />
  </svg>
);
const HiddenDefs = styled.svg`position: absolute;`;
const Defs = () => (
  <HiddenDefs width="0" height="0" aria-hidden="true">
    <defs>
      <linearGradient id="paper" x2="1" y2="1"><stop stopColor="#fff" /><stop offset="1" stopColor="#c2c4c8" /></linearGradient>
      <linearGradient id="steel" x2="1" y2="1"><stop stopColor="#8d9299" /><stop offset="1" stopColor="#f2f2f2" /></linearGradient>
      <linearGradient id="ball" x2="1" y2="1"><stop stopColor="#fff" /><stop offset="1" stopColor="#b9bfc8" /></linearGradient>
    </defs>
  </HiddenDefs>
);

const IconColumn = ({ names, ml, w }: { names: string[]; ml?: number; w?: number }) => (
  <Column $ml={ml} $w={w}>
    {names.map((n) => (
      <Cell key={n} aria-label={n}><Icon n={n} /></Cell>
    ))}
  </Column>
);
const CaretColumn = ({ w = 12 }: { w?: number }) => (
  <Column $w={w}>
    {[0, 1, 2].map((i) => (
      <Cell key={i} aria-label="更多"><Caret /></Cell>
    ))}
  </Column>
);
const PanelFooter = ({ text, caret, launch }: { text: string; caret?: boolean; launch?: boolean }) => (
  <Footer>
    <FooterLabel>
      {text}
      {caret && <Caret w={8} />}
    </FooterLabel>
    {launch && (
      <Launcher aria-label={text + "设置"}>
        <svg width="6" height="6" viewBox="0 0 6 6"><path d="M0 0l5 5M5.500 1v4.500H1" fill="none" stroke="#eee" strokeWidth="1.200" /></svg>
      </Launcher>
    )}
  </Footer>
);

const menus = ["文件(F)", "编辑(E)", "视图(V)", "插入(I)", "格式(O)", "工具(T)", "绘图(D)", "标注(N)", "修改(M)", "窗口(W)", "帮助(H)", "参数(P)"];
const tabs = ["常用", "实体", "曲面", "网格", "可视化", "参数化", "插入", "注释", "视图", "管理", "输出", "附加模块", "精选应用"];

const RibbonPanels = () => (
  <Ribbon>
    <Panel $w={200}>
      <Body>
        <Big $w={62}><BigIcon n="box" /><BigText>长方体</BigText><Caret /></Big>
        <Big $w={42}><BigIcon n="extrude" /><BigText>拉伸</BigText><Caret /></Big>
        <List $ml={7}>
          <Labeled><Icon n="polysolid" />多段体</Labeled>
          <Labeled><Icon n="presspull" />按住并拖动</Labeled>
        </List>
      </Body>
      <PanelFooter text="建模" caret />
    </Panel>
    <Panel $w={68}>
      <Body>
        <Big $w={42}><BigIcon n="smooth" /><BigText>平滑<br />对象</BigText></Big>
        <IconColumn names={["meshPlus", "meshMinus", "meshSlash"]} w={22} />
      </Body>
      <PanelFooter text="网格" launch />
    </Panel>
    <Panel $w={137}>
      <Body $pl={3}>
        <IconColumn names={["union", "subtract", "intersect"]} />
        <IconColumn names={["thicken", "slice", "shell"]} ml={4} />
        <List $ml={5}>
          <Labeled><Icon n="edges" />提取边<Caret /></Labeled>
          <Labeled><Icon n="extrudeFace" />拉伸面<Caret /></Labeled>
          <Labeled><Icon n="separate" />分割<Caret /></Labeled>
        </List>
      </Body>
      <PanelFooter text="实体编辑" caret />
    </Panel>
    <Panel $w={94}>
      <Body $pl={2}>
        <IconColumn names={["pline", "spline", "polygon"]} />
        <IconColumn names={["helix", "line", "rect"]} />
        <IconColumn names={["arc", "circle", "ellipse"]} ml={4} />
        <CaretColumn />
      </Body>
      <PanelFooter text="绘图" caret />
    </Panel>
    <Panel $w={145}>
      <Body $pl={2}>
        <IconColumn names={["align3", "align", "brush"]} />
        <IconColumn names={["gizmoMove", "gizmoRot", "gizmoScale"]} ml={3} />
        <IconColumn names={["move", "rotate", "scale"]} />
        <IconColumn names={["copy", "mirror", "offset"]} ml={4} />
        <IconColumn names={["trim", "fillet", "array"]} />
        <CaretColumn />
      </Body>
      <PanelFooter text="修改" caret />
    </Panel>
    <Panel $w={61}>
      <Body><Big $w={60}><BigIcon n="section" /><BigText>截面<br />平面</BigText></Big></Body>
      <PanelFooter text="截面" caret launch />
    </Panel>
    <Panel $w={145}>
      <Body $pl={3}>
        <IconColumn names={["ucsA", "ucsF", "ucsView"]} />
        <CaretColumn w={8} />
        <CoordGrid>
          {["ucsB", "ucsC", "ucsD", "ucsE", "ucsG", "ucsH", "ucsZ", "ucs3"].map((n) => (
            <Cell key={n} aria-label={n}><Icon n={n} /></Cell>
          ))}
          <Combo $span>
            <Icon n="ucsE" />
            <Pick aria-label="坐标系" defaultValue="世界"><option>世界</option></Pick>
            <Caret w={8} />
          </Combo>
        </CoordGrid>
      </Body>
      <PanelFooter text="坐标" launch />
    </Panel>
    <Panel $w={205}>
      <Body>
        <ViewColumn>
          <Combo $h={23}>
            <Icon n="shaded" />
            <Pick aria-label="视觉样式" defaultValue="着色"><option>着色</option></Pick>
            <Caret w={8} />
          </Combo>
          <ViewGap />
          <Combo $h={21}>
            <Icon n="unsaved" />
            <Pick aria-label="视图" defaultValue="未保存的视图"><option>未保存的视图</option></Pick>
            <Caret w={8} />
          </Combo>
          <Labeled $gap={5} $pl={4}><Icon n="viewport" />单个视口<Caret /></Labeled>
        </ViewColumn>
      </Body>
      <PanelFooter text="视图" caret />
    </Panel>
    <Panel $w={171}>
      <Body>
        <Big $w={38} $on><BigIcon n="cull" /><BigText>剔除</BigText></Big>
        <Big $w={70}><BigIcon n="filter" /><BigText>无过滤器</BigText><Caret /></Big>
        <Big $w={56}><BigIcon n="gizmo" /><BigText>移动<br />小控件</BigText></Big>
        <GizmoMore aria-label="更多小控件"><Caret /></GizmoMore>
      </Body>
      <PanelFooter text="选择" />
    </Panel>
    <Panel $w={252}>
      <Body>
        <Big $w={40}><BigIcon n="layers" /><BigText>图层<br />特性</BigText></Big>
        <LayerBlock>
          <Combo $h={23}>
            <Icon n="bulb" /><Icon n="sun" /><Icon n="lock" />
            <svg width="14" height="14"><rect x=".5" y=".5" width="13" height="13" fill="#fff" stroke="#111" /></svg>
            <Pick aria-label="图层" defaultValue="0"><option>0</option></Pick>
            <Caret w={8} />
          </Combo>
          <LayerRow>
            {["la", "lb", "lc", "ld"].map((n) => <LayerIcon key={n} aria-label={n}><Icon n={n} /></LayerIcon>)}
            <Labeled $gap={4} $pl={4}><Icon n="le" />置为当前</Labeled>
          </LayerRow>
          <LayerRow>
            {["lf", "lg", "lh", "li"].map((n) => <LayerIcon key={n} aria-label={n}><Icon n={n} /></LayerIcon>)}
            <Labeled $gap={4} $pl={4}><Icon n="lj" />匹配图层</Labeled>
          </LayerRow>
        </LayerBlock>
      </Body>
      <PanelFooter text="图层" caret />
    </Panel>
    <Panel $w={68}>
      <Body>
        <Big $w={41}><BigIcon n="group" /><BigText>组</BigText></Big>
        <Column>
          <Cell aria-label="编辑组"><Icon n="g1" /></Cell>
          <Cell aria-label="添加到组"><Icon n="g2" /></Cell>
          <Toggle aria-label="组选择"><Icon n="g3" /></Toggle>
        </Column>
      </Body>
      <PanelFooter text="组" caret />
    </Panel>
  </Ribbon>
);

/* Isometric ground grid: the origin sits under the UCS icon, major lines every fifth step. */
const OX = 906.5;
const OY = 626.5;
const STEP = 18.86;
const SLOPE = 0.57735;
const SPAN = 3000;

const GroundGrid = () => {
  const minor: string[] = [];
  const major: string[] = [];
  for (let k = -100; k <= 100; k++) {
    const y = OY + k * STEP;
    const d =
      `M${OX - SPAN} ${(y - SPAN * SLOPE).toFixed(1)}L${OX + SPAN} ${(y + SPAN * SLOPE).toFixed(1)}` +
      `M${OX - SPAN} ${(y + SPAN * SLOPE).toFixed(1)}L${OX + SPAN} ${(y - SPAN * SLOPE).toFixed(1)}`;
    (k % 5 === 0 ? major : minor).push(d);
  }
  return (
    <g fill="none" shapeRendering="crispEdges">
      <path d={minor.join("")} stroke="#262d38" />
      <path d={major.join("")} stroke="#343b4b" />
      <path d={`M${OX} ${OY}l${SPAN} ${-SPAN * SLOPE}`} stroke="#702429" />
      <path d={`M${OX} ${OY}l${-SPAN} ${-SPAN * SLOPE}`} stroke="#1f6c28" />
    </g>
  );
};

const Drawing = () => (
  <Scene aria-label="模型空间">
    <GroundGrid />
    <g shapeRendering="crispEdges">
      <path d="M878 116L1051 215 885 311 712 211z" fill="#a6a8a4" />
      <path d="M712 211l173 100v203L712 414z" fill="#8a8a8a" />
      <path d="M885 311l166-96v203l-166 96z" fill="#9ea09e" />
    </g>
    <g fill="none" shapeRendering="crispEdges">
      <path d="M1167.500 392v50M1167.500 458v21" stroke="#7c7ce6" />
      <path d="M1118 421l41 24M1176 455l17 9" stroke="#8dff8d" />
      <path d="M1218 421l-42 24M1143 464l16-9" stroke="#ff8a8a" />
      <path d="M1159.500 441.500h16v16h-16z" stroke="#fff" />
    </g>
    <g fontSize="13">
      <text x="1175" y="397" fill="#7f9cf0">Z</text>
      <text x="1122" y="437" fill="#6fdc6f">Y</text>
      <text x="1222" y="437" fill="#d9a16c">X</text>
    </g>
    <g strokeWidth="5">
      <path d="M906 626L872 606" stroke="#5cc95c" />
      <path d="M906 626l35-21" stroke="#b84f4f" />
      <path d="M906.500 627V586" stroke="#4a70ad" />
      <path d="M904 586h5" stroke="#a5cdf5" strokeWidth="3" />
    </g>
    <g fontSize="18" fontWeight="300" fontFamily="Lato, sans-serif">
      <text x="905" y="583" fill="#1c63ff">Z</text>
      <text x="868" y="602" fill="#1fbf1f">Y</text>
      <text x="938" y="602" fill="#e02828">X</text>
    </g>
  </Scene>
);

const ViewCube = () => (
  <svg width="132" height="120" viewBox="0 0 132 120" aria-label="ViewCube">
    <path fillRule="evenodd" fill="#4a505a" d="M2 69a64 41 0 1 0 128 0a64 41 0 1 0-128 0zM17 67a49 32 0 1 0 98 0a49 32 0 1 0-98 0z" />
    <g fontSize="18" fontWeight="500" fill="#a9adb3" textAnchor="middle">
      <text y="7" transform="matrix(.8 .46 -.8 .46 20 94)">西</text>
      <text y="7" transform="matrix(.8 -.46 .8 .46 114 94)">南</text>
      <text y="6" fontSize="15" transform="matrix(.8 -.46 .8 .46 26 41)">北</text>
      <text y="6" fontSize="15" transform="matrix(.8 .46 -.8 .46 107 41)">东</text>
    </g>
    <g stroke="#6d6f73" strokeWidth="1" strokeLinejoin="round">
      <path d="M66 5l35 17-35 20-35-20z" fill="#b0b2b4" />
      <path d="M31 22l35 20v40L33 61z" fill="#a0a2a4" />
      <path d="M101 22L66 42v40l33-21z" fill="#a0a2a4" />
      <path d="M60 37l6-3 6 3v6l-6 3-6-3z" fill="#9aa5ae" stroke="none" />
      <path d="M66 42v40" stroke="#55575b" strokeWidth="2" />
    </g>
    <g fontSize="20" fill="#50565e" textAnchor="middle">
      <text y="7" fontSize="17" transform="matrix(.85 -.46 .85 .46 69 24)">上</text>
      <text y="8" transform="translate(49 54) skewY(30)">左</text>
      <text y="8" transform="translate(83 53) skewY(-30)">前</text>
    </g>
    <path d="M66 54l35-21" stroke="#c97f7f" strokeOpacity=".45" />
  </svg>
);

const navIcon = { fill: "none", stroke: "#3e4349", strokeWidth: 1.3 };

const Navigation = () => (
  <NavBar>
    <NavButton $h={10} $end aria-label="关闭导航栏">
      <svg width="8" height="8" viewBox="0 0 8 8"><circle cx="4" cy="4" r="4" fill="#474b50" /><path d="M2.500 2.500l3 3M5.500 2.500l-3 3" stroke="#777b80" /></svg>
    </NavButton>
    <NavButton $h={38} aria-label="控制盘">
      <svg width="24" height="24" viewBox="0 0 24 24" {...navIcon}><path d="M12 2h10v10a10 10 0 1 1-10-10z" /><circle cx="12" cy="12" r="6" /><circle cx="12" cy="12" r="3.500" /><path d="M16.500 16.500l3 3" /></svg>
    </NavButton>
    <NavButton $h={8} aria-label="控制盘选项"><Caret c="#3a3e44" /></NavButton>
    <NavButton $h={32} aria-label="平移">
      <svg width="24" height="24" viewBox="0 0 24 24" {...navIcon}><path d="M8 23l-6-8q-2-3 1-2l4 3L5 6q0-2 2-1l2 7L9 3q1-2 2.500 0L12.500 11 14 3q1.500-2 2.500 0L16 12l3-6q2-1 2 1l-2 9-3 7z" /></svg>
    </NavButton>
    <NavButton $h={28} aria-label="缩放">
      <svg width="24" height="24" viewBox="0 0 24 24" {...navIcon}><path d="M1 1l15 15M16 1L1 16M1 6V1h5M11 1h5v5M1 11v5h5" /><circle cx="17" cy="16" r="5" fill="#5a5e64" /><path d="M20.500 19.500L24 23" strokeWidth="2.500" /></svg>
    </NavButton>
    <NavButton $h={10} aria-label="缩放选项"><Caret c="#3a3e44" /></NavButton>
    <NavButton $h={28} aria-label="动态观察">
      <svg width="24" height="24" viewBox="0 0 24 24" {...navIcon}><path d="M10 22V6H7.500L12 1l4.500 5H14v16z" /><path d="M8 8Q1 10 1.500 13T10 17M16 8q8 2 7 5t-9 4" /><path d="M7 13l-5 3 5 3z" fill="#3e4349" /></svg>
    </NavButton>
    <NavButton $h={10} aria-label="动态观察选项"><Caret c="#3a3e44" /></NavButton>
    <NavButton $h={32} aria-label="ShowMotion">
      <svg width="24" height="24" viewBox="0 0 24 24" {...navIcon}><path d="M1 1h5v5H1zM9 1h5v5H9zM17 1h5v5h-5zM1 10h16v13H1z" /><path d="M6 12.500l6 4-6 4z" fill="#3e4349" /></svg>
    </NavButton>
    <Spacer />
    <NavButton $h={12} $end aria-label="自定义">
      <svg width="8" height="8" viewBox="0 0 8 8"><circle cx="4" cy="4" r="4" fill="#474b50" /><path d="M2 3.500h4M2 5h4" stroke="#777b80" /></svg>
    </NavButton>
  </NavBar>
);

const S = ({ n, lit, label, w }: { n: string; lit?: boolean; label: string; w?: number }) => (
  <SBtn $lit={lit} $w={w} aria-label={label}><Icon n={n} /></SBtn>
);
const More = ({ w = 16 }: { w?: number }) => (
  <SBtn $w={w} aria-label="选项"><Caret w={7} /></SBtn>
);

export default function App() {
  return (
    <App_>
      <Global />
      <Defs />
      <Header>
        <AppButton aria-label="应用程序菜单">
          <svg width="24" height="27" viewBox="0 0 24 27">
            <path d="M0 26L8 1h7l9 25h-7l-2-6H8l-2 6z" fill="#c4161c" />
            <path d="M8 1h7l-2 3-7 20-6 2z" fill="#e0393c" />
            <path d="M11.500 7l4 11H8z" fill="#a9a9a9" />
            <path d="M8 18l9-2 7 10h-7l-2-6H7z" fill="#9d0f16" />
          </svg>
          <Caret w={7} c="#222" />
        </AppButton>
        <TitleBar>
          <Quick>
            {[["newfile", "新建"], ["open", "打开"], ["save", "保存"], ["saveas", "另存为"], ["print", "打印"], ["undo", "放弃"]].map(([n, l]) => (
              <QuickButton key={n} aria-label={l}><Icon n={n} /></QuickButton>
            ))}
            <QuickButton $w={12} aria-label="放弃列表"><Caret /></QuickButton>
            <QuickButton aria-label="重做"><Icon n="redo" /></QuickButton>
            <QuickButton $w={12} aria-label="重做列表"><Caret c="#b5b5b5" /></QuickButton>
            <Combo $h={22} $w={180}>
              <Icon n="gear" />
              <Pick aria-label="工作空间" defaultValue="三维建模"><option>三维建模</option></Pick>
              <Caret w={8} />
            </Combo>
            <QuickButton $w={16} aria-label="自定义快速访问工具栏">
              <svg width="9" height="8" viewBox="0 0 9 8"><path d="M0 1h9" stroke="#fff" strokeWidth="1.500" /><path d="M.5 4h8l-4 4z" fill="#fff" /></svg>
            </QuickButton>
          </Quick>
          <Glass>
            <Title><span>Autodesk AutoCAD 2017</span><span>Drawing1.dwg</span></Title>
            <WindowButtons>
              <WindowButton $w={28} aria-label="最小化"><svg width="12" height="6"><rect x=".5" y="1" width="11" height="4" rx="1" fill="#fff" stroke="#555a68" /></svg></WindowButton>
              <WindowButton $w={27} aria-label="还原"><svg width="13" height="13" fill="#fff" stroke="#555a68"><rect x="3.500" y=".5" width="9" height="9" rx="1" /><rect x=".5" y="2.500" width="9" height="9.500" rx="1" /><rect x="3.500" y="5.500" width="3" height="3" /></svg></WindowButton>
              <WindowButton $w={47} aria-label="关闭"><svg width="12" height="11" viewBox="0 0 12 11"><path d="M.5.500h3.500L6 3l2-2.500h3.500L8 5.500l3.500 5H8L6 8l-2 2.500H.5L4 5.500z" fill="#fff" stroke="#555a68" /></svg></WindowButton>
            </WindowButtons>
          </Glass>
        </TitleBar>
        <MenuBar>
          {menus.map((m) => <MenuItem key={m}>{m}</MenuItem>)}
          <Spacer />
          <QuickButton $w={18} aria-label="最小化图形"><svg width="10" height="10"><path d="M0 7h10v2H0z" fill="#222" /></svg></QuickButton>
          <QuickButton $w={18} aria-label="还原图形"><svg width="12" height="11" fill="none" stroke="#222" strokeWidth="1.500"><path d="M4.500 3.500v-2.500h7v6h-3M.7 4.500h7.500v5.500H.7z" /></svg></QuickButton>
          <QuickButton $w={14} aria-label="关闭图形"><svg width="9" height="9"><path d="M1 0l7 9M8 0L1 9" stroke="#222" strokeWidth="2.400" /></svg></QuickButton>
        </MenuBar>
      </Header>
      <Tabs>
        {tabs.map((t, i) => <Tab key={t} $on={i === 0}>{t}</Tab>)}
        <Spacer as={Tab} aria-label="最小化功能区">
          <svg width="36" height="12" viewBox="-10 0 36 12"><rect x="1" y="1" width="13" height="7" rx="2" fill="#f2f2f2" /><path d="M4.500 6l3-3 3 3z" fill="#333" /><path d="M20 3h5l-2.500 3z" fill="#eee" /></svg>
        </Spacer>
      </Tabs>
      <RibbonPanels />
      <DocTabs>
        <DocTab>
          <DocName>Drawing1*</DocName>
          <button aria-label="关闭 Drawing1"><svg width="8" height="8"><path d="M1 1l6 6M7 1L1 7" stroke="#4a4a4a" strokeWidth="1.600" /></svg></button>
        </DocTab>
        <AddDoc aria-label="新图形"><svg width="9" height="9"><path d="M0 4.500h9M4.500 0v9" stroke="#c8c8c8" strokeWidth="2" /></svg></AddDoc>
      </DocTabs>
      <Stage>
        <Drawing />
        <Edge />
        <ViewLabel><button>[−]</button><button>[西南等轴测]</button><button>[着色]</button></ViewLabel>
        <CubeBox>
          <ViewCube />
          <Wcs>WCS<svg width="9" height="6"><path d="M.5.500h8L4.500 5z" fill="none" stroke="#747783" /></svg></Wcs>
        </CubeBox>
        <Navigation />
        <Meter><MeterBar /><MeterBar /><MeterBar /><MeterBar /></Meter>
        <Command>
          <History><HistoryLine $dim>命令:</HistoryLine><HistoryLine>命令:</HistoryLine></History>
          <CommandBar>
            <CommandGrip>
              <svg width="6" height="18"><path d="M1 0v18M4.500 0v18" stroke="#a0a0a0" strokeWidth="1.500" strokeDasharray="2 1" /></svg>
              <CommandButton $ml={5} aria-label="关闭命令行"><svg width="9" height="9"><path d="M0 0l9 9M9 0L0 9" stroke="#d4d4d4" strokeWidth="1.800" /></svg></CommandButton>
              <CommandButton $ml={10} aria-label="自定义命令行"><svg width="15" height="15" viewBox="0 0 15 15"><path d="M5 0L3.500.8l2 2.200-.8 2-2.200.5L.8 3.500Q-.5 7 3 8.500q1.500.3 2.500-.3l5.500 6q2 1.300 3.300 0 1-1.500 0-2.700L8.300 6Q9 1.500 5 0z" fill="#ccd0d4" stroke="#222" strokeWidth=".6" /></svg></CommandButton>
            </CommandGrip>
            <CommandField>
              <svg width="14" height="14"><rect x=".5" y=".5" width="13" height="13" rx="1" fill="#a9b3c0" stroke="#6c7888" /><path d="M3 4l3 3-3 3M7 10.500h4" fill="none" stroke="#2d3540" strokeWidth="1.200" /></svg>
              <Caret w={6} c="#555" />
              <CommandInput aria-label="命令行" placeholder="键入命令" />
              <svg width="8" height="5"><path d="M0 5h8L4 0z" fill="#111" /></svg>
            </CommandField>
          </CommandBar>
        </Command>
      </Stage>
      <Bottom>
        <LayoutTab $w={48} $on>模型</LayoutTab>
        <LayoutTab $w={52}>布局1</LayoutTab>
        <LayoutTab $w={54}>布局2</LayoutTab>
        <AddLayout aria-label="新建布局"><svg width="9" height="9"><path d="M0 4.500h9M4.500 0v9" stroke="#c8c8c8" strokeWidth="2" /></svg></AddLayout>
        <Spacer />
        <Seg $w={153}><Coords>8.6540, 0.6549, 0.0000</Coords></Seg>
        <Seg $w={30}><Model>模型</Model></Seg>
        <Seg><S n="sGrid" lit label="栅格" /><S n="sSnap" label="捕捉" /><More /></Seg>
        <Seg><S n="sOrtho" label="正交" /><S n="sPolar" lit label="极轴追踪" /><More /><S n="sIso" label="等轴测" /><More w={14} /></Seg>
        <Seg><S n="sTrack" lit label="对象捕捉追踪" /><S n="sOsnap" lit label="对象捕捉" /><More /></Seg>
        <Seg><S n="sUcs" lit label="动态 UCS" /></Seg>
        <Seg><S n="sAnnoA" lit label="注释可见性" /><S n="sAnnoB" label="自动缩放" /><S n="sAnnoC" label="注释比例" /><Scale>1:1</Scale><More /></Seg>
        <Seg><S n="sGear" label="切换工作空间" /><More /></Seg>
        <Seg><S n="sPlus" label="注释监视器" /></Seg>
        <Seg><S n="sUnits" w={25} label="隔离对象" /></Seg>
        <Seg><S n="sPerf" lit label="硬件加速" /></Seg>
        <Seg><S n="sFull" w={26} label="全屏显示" /><S n="sMenu" label="自定义" /></Seg>
      </Bottom>
      <Taskbar />
      <Watermark>最需教育</Watermark>
      <Markup width="1120" height="720" fill="none" stroke="#ff1e10" strokeWidth="3" aria-hidden="true">
        <rect x="853.500" y="64.500" width="203" height="31" rx="1" />
        <rect x="651.500" y="307.500" width="457" height="405" rx="1" />
        <path d="M943.500 109L931 278l5-1-10 17-8-18 5 1z" fill="#ff1e10" stroke="none" />
      </Markup>
    </App_>
  );
}
